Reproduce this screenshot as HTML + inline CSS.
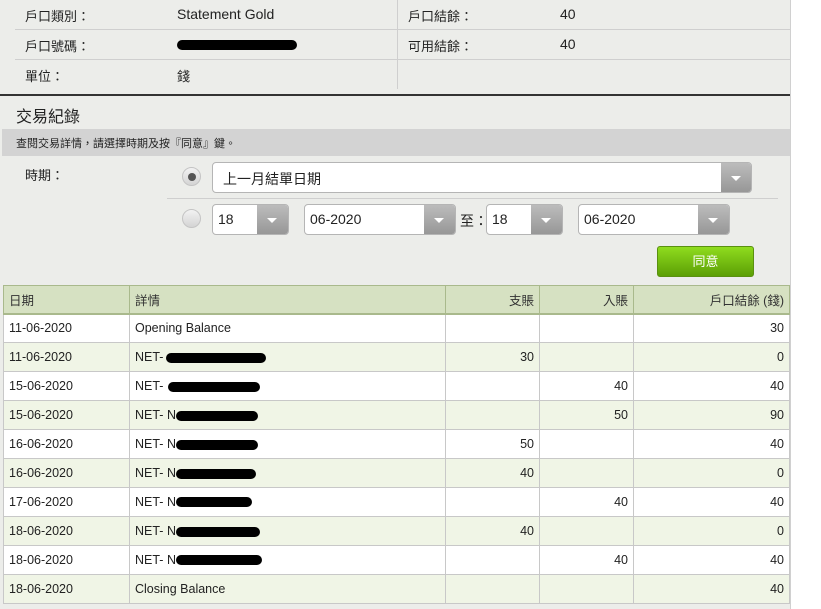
<!DOCTYPE html>
<html><head><meta charset="utf-8"><style>
*{box-sizing:border-box;margin:0;padding:0}
body{width:821px;height:609px;background:#fff;font-family:"Liberation Sans","Noto Sans CJK TC",sans-serif;font-size:13px;color:#222;position:relative;overflow:hidden}
#pg{position:absolute;left:0;top:0;width:791px;height:609px;background:#ecedea;border-right:1px solid #d0d0d0}
.a{position:absolute;white-space:nowrap}
.hl{position:absolute;height:1px;background:#cfcfcf}
.blob{position:absolute;height:10px;background:#000;border-radius:5px}
.sel{position:absolute;height:31px;background:#fff;border:1px solid #b5b5b5;border-radius:4px;overflow:hidden}
.sel span{position:absolute;left:10px;top:6px;font-size:14px}
.sel i{position:absolute;right:0;top:0;width:30px;height:100%;background:linear-gradient(#bcbcbc,#979797)}
.sel i:after{content:"";position:absolute;left:10px;top:13px;border-left:5px solid transparent;border-right:5px solid transparent;border-top:5px solid #fff}
.rad{position:absolute;width:19px;height:19px;border-radius:50%;background:linear-gradient(#f2f2f2,#d4d4d4);border:1px solid #c4c4c4}
table{position:absolute;left:3px;top:285px;width:787px;border-collapse:collapse;font-size:12.5px}
td,th{height:29px;border:1px solid #c8c8c8;padding:0 5px;font-weight:normal;text-align:left}
th{background:#d6e1c2;color:#333;height:28px;border-color:#a9b98c;border-bottom:2px solid #a9b98c}
.r{text-align:right}
tr:nth-child(odd) td{background:#f0f5e6}
tr:nth-child(even) td{background:#fff}
td{position:relative}
</style></head><body><div id="pg">
<div class="a" style="left:25px;top:6px">戶口類別：</div>
<div class="a" style="left:177px;top:6px;font-size:14px">Statement Gold</div>
<div class="a" style="left:408px;top:6px">戶口結餘：</div>
<div class="a" style="left:560px;top:6px;font-size:14px">40</div>
<div class="hl" style="left:15px;top:29px;width:775px"></div>
<div class="a" style="left:25px;top:36px">戶口號碼：</div>
<div class="blob" style="left:177px;top:40px;width:120px"></div>
<div class="a" style="left:408px;top:36px">可用結餘：</div>
<div class="a" style="left:560px;top:36px;font-size:14px">40</div>
<div class="hl" style="left:15px;top:59px;width:775px"></div>
<div class="a" style="left:25px;top:66px">單位：</div>
<div class="a" style="left:177px;top:66px">錢</div>
<div style="position:absolute;left:397px;top:0;width:1px;height:89px;background:#cfcfcf"></div>
<div style="position:absolute;left:0;top:94px;width:790px;height:2px;background:#333"></div>
<div class="a" style="left:16px;top:103px;font-size:16px">交易紀錄</div>
<div style="position:absolute;left:2px;top:129px;width:788px;height:27px;background:#d3d3d3"></div>
<div class="a" style="left:16px;top:135px;font-size:11px">查閱交易詳情，請選擇時期及按『同意』鍵。</div>
<div class="a" style="left:25px;top:165px">時期：</div>
<div class="rad" style="left:182px;top:167px"><div style="position:absolute;left:5px;top:5px;width:8px;height:8px;border-radius:50%;background:#555"></div></div>
<div class="sel" style="left:212px;top:162px;width:540px"><span>上一月結單日期</span><i></i></div>
<div class="hl" style="left:167px;top:198px;width:611px"></div>
<div class="rad" style="left:182px;top:209px"></div>
<div class="sel" style="left:212px;top:204px;width:77px"><span style="left:5px">18</span><i style="width:31px"></i></div>
<div class="sel" style="left:304px;top:204px;width:152px"><span style="left:5px">06-2020</span><i style="width:31px"></i></div>
<div class="a" style="left:460px;top:211px;font-size:14px">至：</div>
<div class="sel" style="left:486px;top:204px;width:77px"><span style="left:5px">18</span><i style="width:31px"></i></div>
<div class="sel" style="left:578px;top:204px;width:152px"><span style="left:5px">06-2020</span><i style="width:31px"></i></div>
<div style="position:absolute;left:657px;top:246px;width:97px;height:31px;border-radius:3px;background:linear-gradient(#8fdc1e,#5c9f05);border:1px solid #5a9010;color:#fff;text-align:center;line-height:29px;font-size:13px">同意</div>
<table>
<tr><th style="width:126px">日期</th><th style="width:316px">詳情</th><th class="r" style="width:94px">支賬</th><th class="r" style="width:94px">入賬</th><th class="r">戶口結餘 (錢)</th></tr>
<tr><td>11-06-2020</td><td>Opening Balance</td><td></td><td></td><td class="r">30</td></tr>
<tr><td>11-06-2020</td><td>NET- <span class="blob" style="left:36px;top:10px;width:100px"></span></td><td class="r">30</td><td></td><td class="r">0</td></tr>
<tr><td>15-06-2020</td><td>NET- <span class="blob" style="left:38px;top:10px;width:92px"></span></td><td></td><td class="r">40</td><td class="r">40</td></tr>
<tr><td>15-06-2020</td><td>NET- N<span class="blob" style="left:46px;top:10px;width:82px"></span></td><td></td><td class="r">50</td><td class="r">90</td></tr>
<tr><td>16-06-2020</td><td>NET- N<span class="blob" style="left:46px;top:10px;width:82px"></span></td><td class="r">50</td><td></td><td class="r">40</td></tr>
<tr><td>16-06-2020</td><td>NET- N<span class="blob" style="left:46px;top:10px;width:80px"></span></td><td class="r">40</td><td></td><td class="r">0</td></tr>
<tr><td>17-06-2020</td><td>NET- N<span class="blob" style="left:46px;top:9px;width:76px"></span></td><td></td><td class="r">40</td><td class="r">40</td></tr>
<tr><td>18-06-2020</td><td>NET- N<span class="blob" style="left:46px;top:10px;width:84px"></span></td><td class="r">40</td><td></td><td class="r">0</td></tr>
<tr><td>18-06-2020</td><td>NET- N<span class="blob" style="left:46px;top:9px;width:86px"></span></td><td></td><td class="r">40</td><td class="r">40</td></tr>
<tr><td>18-06-2020</td><td>Closing Balance</td><td></td><td></td><td class="r">40</td></tr>
</table>
</div></body></html>
